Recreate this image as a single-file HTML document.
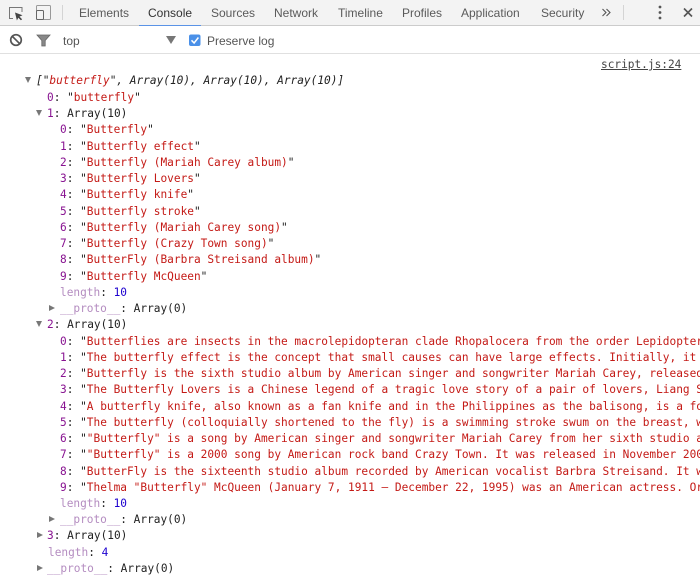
<!DOCTYPE html>
<html><head><meta charset="utf-8">
<style>
html,body{margin:0;padding:0;background:#fff}
#p{position:relative;width:700px;height:578px;overflow:hidden;background:#fff;font-family:"Liberation Sans",sans-serif;filter:blur(.35px)}
#hd{position:absolute;left:0;top:0;width:700px;height:25px;background:#f3f3f3;border-bottom:1px solid #ccc}
#bar{position:absolute;left:0;top:53px;width:700px;height:1px;background:#e0e0e0}
.t{position:absolute;top:5px;font-size:12px;line-height:16px;color:#5a5a5a;white-space:nowrap}
#ul{position:absolute;left:139px;top:25px;width:62px;height:1px;background:#5b93e6}
.r{position:absolute;left:0;width:700px;height:16px;line-height:16px;font-family:"DejaVu Sans Mono",monospace;font-size:11.14px;white-space:pre;overflow:hidden;color:#222}
.r span.x{position:absolute;top:0}
.i{color:#881391}
.s{color:#c41a16}
.l{color:#b48cc0}
.n{color:#1c00cf}
.a{position:absolute;width:0;height:0}
.d{border-left:3.5px solid transparent;border-right:3.5px solid transparent;border-top:6px solid #777}
.c{border-top:3.5px solid transparent;border-bottom:3.5px solid transparent;border-left:6px solid #777}
svg{position:absolute;left:0;top:0}
</style></head><body>
<div id="p">
<div id="hd"></div>
<div id="bar"></div>
<div id="ul"></div>
<div class="t" style="left:79px">Elements</div>
<div class="t" style="left:148px;color:#333">Console</div>
<div class="t" style="left:211px">Sources</div>
<div class="t" style="left:274px">Network</div>
<div class="t" style="left:338px">Timeline</div>
<div class="t" style="left:402px">Profiles</div>
<div class="t" style="left:461px">Application</div>
<div class="t" style="left:541px">Security</div>
<div class="t" style="left:63px;top:33px;color:#555">top</div>
<div class="t" style="left:207px;top:33px;color:#555">Preserve log</div>
<svg width="700" height="60" viewBox="0 0 700 60">
<path d="M13 18.500H9.500V7.500H22V12" fill="none" stroke="#777" stroke-width="1"/>
<path d="M15 12.500l7.500 2.800-3 1.300 2.600 2.600-1.200 1.100-2.600-2.600-1.400 2.800z" fill="#444"/>
<rect x="36.500" y="5.500" width="14" height="14" rx="1" fill="none" stroke="#999"/>
<rect x="36.500" y="10.500" width="7" height="9" rx="1" fill="#f3f3f3" stroke="#666"/>
<path d="M62.500 5v15M623.500 5v15" stroke="#d4d4d4"/>
<path d="M602.500 9l3.500 3.500-3.500 3.500M606.500 9l3.500 3.500-3.500 3.500" fill="none" stroke="#555" stroke-width="1.100"/>
<circle cx="660" cy="7" r="1.400" fill="#555"/><circle cx="660" cy="12.500" r="1.400" fill="#555"/><circle cx="660" cy="18" r="1.400" fill="#555"/>
<path d="M684 8.500l8 8M692 8.500l-8 8" stroke="#555" stroke-width="1.600"/>
<circle cx="16" cy="40" r="5.300" fill="none" stroke="#555" stroke-width="1.700"/>
<path d="M12.300 36.300l7.400 7.400" stroke="#555" stroke-width="1.700"/>
<path d="M37 35h13l-4.800 5.500V46h-3.400v-5.500z" fill="#888" stroke="#666" stroke-width="0.800"/>
<path d="M166 36h10l-5 8z" fill="#777"/>
<rect x="189" y="34.500" width="11.500" height="11.500" rx="2" fill="#4a90e8"/>
<path d="M191.500 40.300l2.600 2.700 4.300-5.500" fill="none" stroke="#fff" stroke-width="1.500"/>
<rect x="351" y="76" width="11" height="11" rx="2.500" fill="#b4cdf2"/>
<path d="M356.500 78v1.500M356.500 80.500v4" stroke="#fff" stroke-width="1.500"/>
</svg>

<div class="r" style="top:57px"><span class="x" style="left:601px;text-decoration:underline;color:#444">script.js:24</span></div>

<div class="a d" style="left:25px;top:77px"></div>
<div class="r" style="top:73px;font-style:italic"><span class="x" style="left:36px">["<span class="s">butterfly</span>", Array(10), Array(10), Array(10)]</span></div>
<div class="r" style="top:90px"><span class="x" style="left:47px"><span class="i">0</span>: "<span class="s">butterfly</span>"</span></div>

<div class="a d" style="left:36px;top:110px"></div>
<div class="r" style="top:106px"><span class="x" style="left:47px"><span class="i">1</span>: Array(10)</span></div>
<div class="r" style="top:122px"><span class="x" style="left:60px"><span class="i">0</span>: "<span class="s">Butterfly</span>"</span></div>
<div class="r" style="top:139px"><span class="x" style="left:60px"><span class="i">1</span>: "<span class="s">Butterfly effect</span>"</span></div>
<div class="r" style="top:155px"><span class="x" style="left:60px"><span class="i">2</span>: "<span class="s">Butterfly (Mariah Carey album)</span>"</span></div>
<div class="r" style="top:171px"><span class="x" style="left:60px"><span class="i">3</span>: "<span class="s">Butterfly Lovers</span>"</span></div>
<div class="r" style="top:187px"><span class="x" style="left:60px"><span class="i">4</span>: "<span class="s">Butterfly knife</span>"</span></div>
<div class="r" style="top:204px"><span class="x" style="left:60px"><span class="i">5</span>: "<span class="s">Butterfly stroke</span>"</span></div>
<div class="r" style="top:220px"><span class="x" style="left:60px"><span class="i">6</span>: "<span class="s">Butterfly (Mariah Carey song)</span>"</span></div>
<div class="r" style="top:236px"><span class="x" style="left:60px"><span class="i">7</span>: "<span class="s">Butterfly (Crazy Town song)</span>"</span></div>
<div class="r" style="top:252px"><span class="x" style="left:60px"><span class="i">8</span>: "<span class="s">ButterFly (Barbra Streisand album)</span>"</span></div>
<div class="r" style="top:269px"><span class="x" style="left:60px"><span class="i">9</span>: "<span class="s">Butterfly McQueen</span>"</span></div>
<div class="r" style="top:285px"><span class="x" style="left:60px"><span class="l">length</span>: <span class="n">10</span></span></div>
<div class="a c" style="left:49px;top:305px"></div>
<div class="r" style="top:301px"><span class="x" style="left:60px"><span class="l">__proto__</span>: Array(0)</span></div>

<div class="a d" style="left:36px;top:321px"></div>
<div class="r" style="top:317px"><span class="x" style="left:47px"><span class="i">2</span>: Array(10)</span></div>
<div class="r" style="top:334px"><span class="x" style="left:60px"><span class="i">0</span>: "<span class="s">Butterflies are insects in the macrolepidopteran clade Rhopalocera from the order Lepidoptera</span></span></div>
<div class="r" style="top:350px"><span class="x" style="left:60px"><span class="i">1</span>: "<span class="s">The butterfly effect is the concept that small causes can have large effects. Initially, it was</span></span></div>
<div class="r" style="top:366px"><span class="x" style="left:60px"><span class="i">2</span>: "<span class="s">Butterfly is the sixth studio album by American singer and songwriter Mariah Carey, released on</span></span></div>
<div class="r" style="top:382px"><span class="x" style="left:60px"><span class="i">3</span>: "<span class="s">The Butterfly Lovers is a Chinese legend of a tragic love story of a pair of lovers, Liang Shanbo</span></span></div>
<div class="r" style="top:399px"><span class="x" style="left:60px"><span class="i">4</span>: "<span class="s">A butterfly knife, also known as a fan knife and in the Philippines as the balisong, is a folding</span></span></div>
<div class="r" style="top:415px"><span class="x" style="left:60px"><span class="i">5</span>: "<span class="s">The butterfly (colloquially shortened to the fly) is a swimming stroke swum on the breast, with</span></span></div>
<div class="r" style="top:431px"><span class="x" style="left:60px"><span class="i">6</span>: "<span class="s">"Butterfly" is a song by American singer and songwriter Mariah Carey from her sixth studio album</span></span></div>
<div class="r" style="top:447px"><span class="x" style="left:60px"><span class="i">7</span>: "<span class="s">"Butterfly" is a 2000 song by American rock band Crazy Town. It was released in November 2000 as</span></span></div>
<div class="r" style="top:464px"><span class="x" style="left:60px"><span class="i">8</span>: "<span class="s">ButterFly is the sixteenth studio album recorded by American vocalist Barbra Streisand. It was</span></span></div>
<div class="r" style="top:480px"><span class="x" style="left:60px"><span class="i">9</span>: "<span class="s">Thelma "Butterfly" McQueen (January 7, 1911 – December 22, 1995) was an American actress. Origin</span></span></div>
<div class="r" style="top:496px"><span class="x" style="left:60px"><span class="l">length</span>: <span class="n">10</span></span></div>
<div class="a c" style="left:49px;top:516px"></div>
<div class="r" style="top:512px"><span class="x" style="left:60px"><span class="l">__proto__</span>: Array(0)</span></div>
<div class="a c" style="left:37px;top:532px"></div>
<div class="r" style="top:528px"><span class="x" style="left:47px"><span class="i">3</span>: Array(10)</span></div>
<div class="r" style="top:545px"><span class="x" style="left:48px"><span class="l">length</span>: <span class="n">4</span></span></div>
<div class="a c" style="left:37px;top:565px"></div>
<div class="r" style="top:561px"><span class="x" style="left:47px"><span class="l">__proto__</span>: Array(0)</span></div>
</div>
</body></html>
